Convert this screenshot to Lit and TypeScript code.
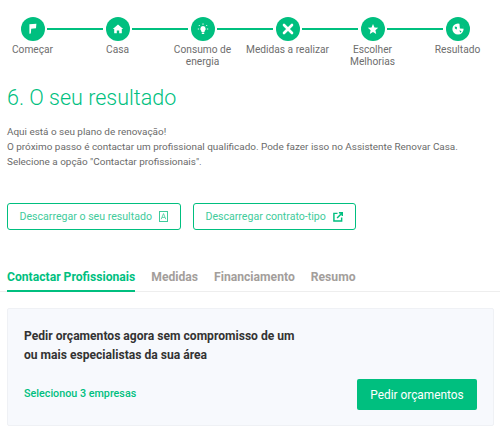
import { LitElement, html, css, svg } from "lit";
import { customElement } from "lit/decorators.js";

const icons = [
  svg`<path d="M8.4 7.2 L15.4 6.8 L15 11.2 L10.2 11.8 L9.8 16.6 L8.4 16.8 Z" fill="#fff"/>`,
  svg`<path d="M12 7.4 L17.2 12 L15.8 12 L15.8 16.2 L13.2 16.2 L13.2 13.4 L10.8 13.4 L10.8 16.2 L8.2 16.2 L8.2 12 L6.8 12 Z" fill="#fff"/>`,
  svg`<path d="M12 9 a2.8 2.8 0 0 1 1.6 5 L13.6 15 L10.4 15 L10.4 14 a2.8 2.8 0 0 1 1.6 -5 Z M10.8 15.6 h2.4 v1.4 h-2.4 Z" fill="#fff"/><path d="M12 6.4 v1.4 M7.8 8 l1.1 1.1 M16.2 8 l-1.1 1.1 M6.8 12 h1.3 M15.9 12 h1.3" stroke="#fff" stroke-width="0.9"/>`,
  svg`<path d="M8 8 L16 16 M16 8 L8 16" stroke="#fff" stroke-width="2.6" stroke-linecap="round"/>`,
  svg`<path d="M12 7 L13.5 10.4 L17.2 10.8 L14.4 13.3 L15.2 17 L12 15.1 L8.8 17 L9.6 13.3 L6.8 10.8 L10.5 10.4 Z" fill="#fff"/>`,
  svg`<circle cx="12" cy="12" r="5.6" fill="#fff"/><path d="M8.8 9.6 l2.2 .4 l-.2 2.4 l-1.9 -.8 Z M13.4 6.4 l.5 5 l4 .4 v-1.8 l-2.4 -3.6 Z M13.4 13.2 l2.2 1 l-1.4 1.6 Z" fill="#00bf7f"/>`,
];

const steps = [
  ["Começar"],
  ["Casa"],
  ["Consumo de", "energia"],
  ["Medidas a realizar"],
  ["Escolher", "Melhorias"],
  ["Resultado"],
];

@customElement("app-root")
export class AppRoot extends LitElement {
  static styles = css`
    :host {
      display: block;
      width: 500px;
      height: 436px;
      overflow: hidden;
      background: #fff;
      font-family: Roboto, "Liberation Sans", sans-serif;
      color: #6f6f6f;
    }
    .stepper {
      display: grid;
      grid-template-columns: repeat(6, 85px);
      width: 510px;
      margin-left: -10px;
      padding-top: 16.5px;
      height: 67.5px;
    }
    .step {
      position: relative;
      display: flex;
      flex-direction: column;
      align-items: center;
      font-size: 10.2px;
      line-height: 12px;
      color: #6e6e6e;
      text-align: center;
      font-weight: 400;
      white-space: nowrap;
    }
    .step:not(:last-child)::after {
      content: "";
      position: absolute;
      left: 57px;
      width: 56px;
      top: 11px;
      height: 2px;
      background: #00c07f;
    }
    .circle {
      width: 24px;
      height: 24px;
      display: block;
      margin-bottom: 3px;
    }
    h1 {
      margin: 0;
      padding: 0 0 0 7px;
      font-size: 21.5px;
      line-height: 28px;
      font-weight: 300;
      color: #00bf7f;
    }
    .intro {
      margin: 12px 0 0;
      padding-left: 7px;
      font-size: 9.93px;
      line-height: 15px;
      font-weight: 400;
      color: #6a6a6a;
    }
    .actions {
      display: flex;
      gap: 12px;
      padding: 34px 0 0 7px;
    }
    .outline {
      display: flex;
      align-items: center;
      gap: 7px;
      height: 27px;
      box-sizing: border-box;
      padding: 0 12px 0 11.5px;
      border: 1.5px solid #00bf7f;
      border-radius: 3px;
      font-size: 10.6px;
      color: #3fcb9b;
      font-weight: 400;
      white-space: nowrap;
    }
    .outline svg {
      display: block;
    }
    .tabs {
      display: flex;
      gap: 16px;
      margin-top: 33px;
      padding-left: 7px;
      height: 29px;
      box-sizing: border-box;
      border-bottom: 1px solid #eeeeee;
      font-size: 12.15px;
      font-weight: 700;
      color: #a39e9b;
    }
    .tab {
      line-height: 28px;
      height: 29px;
      box-sizing: border-box;
    }
    .tab.active {
      color: #00bf7f;
      border-bottom: 2px solid #00bf7f;
    }
    .card {
      margin: 16px 6px 0 7px;
      height: 118px;
      box-sizing: border-box;
      background: #f7f9fd;
      border: 1px solid #eff1f5;
      border-radius: 2px;
      padding: 18px 16px 15px 16px;
      display: flex;
      flex-direction: column;
      justify-content: space-between;
    }
    .card h2 {
      margin: 0;
      font-size: 12.1px;
      line-height: 19px;
      font-weight: 700;
      color: #333333;
      width: 280px;
    }
    .row {
      display: flex;
      justify-content: space-between;
      align-items: center;
    }
    .count {
      margin-bottom: 2px;
      font-size: 10.75px;
      font-weight: 500;
      color: #00bf7f;
    }
    .cta {
      display: flex;
      align-items: center;
      justify-content: center;
      width: 120px;
      height: 31px;
      background: #00bf7f;
      border-radius: 2px;
      color: #fff;
      font-size: 11.85px;
      font-weight: 400;
    }
  `;

  render() {
    return html`
      <div class="stepper">
        ${steps.map(
          (lines, i) => html`<div class="step">
            <svg class="circle" viewBox="0 0 24 24">
              <circle cx="12" cy="12" r="12" fill="#00bf7f"></circle>
              ${icons[i]}
            </svg>
            ${lines.map((l) => html`<span>${l}</span>`)}
          </div>`
        )}
      </div>
      <h1>6. O seu resultado</h1>
      <p class="intro">
        Aqui está o seu plano de renovação!<br />
        O próximo passo é contactar um profissional qualificado. Pode fazer isso no Assistente Renovar Casa.<br />
        Selecione a opção "Contactar profissionais".
      </p>
      <div class="actions">
        <div class="outline">
          Descarregar o seu resultado
          <svg width="9" height="11" viewBox="0 0 9 11" fill="none" stroke="#3fcb9b" stroke-width="1">
            <rect x="0.5" y="0.5" width="8" height="10"></rect>
            <path d="M2.2 8.2 L4.5 2.6 L6.8 8.2 M3 6.4 H6" stroke-width="0.8"></path>
          </svg>
        </div>
        <div class="outline">
          Descarregar contrato-tipo
          <svg width="10" height="10" viewBox="0 0 11 11" fill="none" stroke="#00bf7f" stroke-width="1.6">
            <path d="M5 1.5 H1 V10 H9.5 V6"></path>
            <path d="M4.5 6.5 L10 1 M6.5 0.8 H10.2 V4.5"></path>
          </svg>
        </div>
      </div>
      <div class="tabs">
        <div class="tab active">Contactar Profissionais</div>
        <div class="tab">Medidas</div>
        <div class="tab">Financiamento</div>
        <div class="tab">Resumo</div>
      </div>
      <div class="card">
        <h2>Pedir orçamentos agora sem compromisso de um ou mais especialistas da sua área</h2>
        <div class="row">
          <span class="count">Selecionou 3 empresas</span>
          <div class="cta">Pedir orçamentos</div>
        </div>
      </div>
    `;
  }
}
